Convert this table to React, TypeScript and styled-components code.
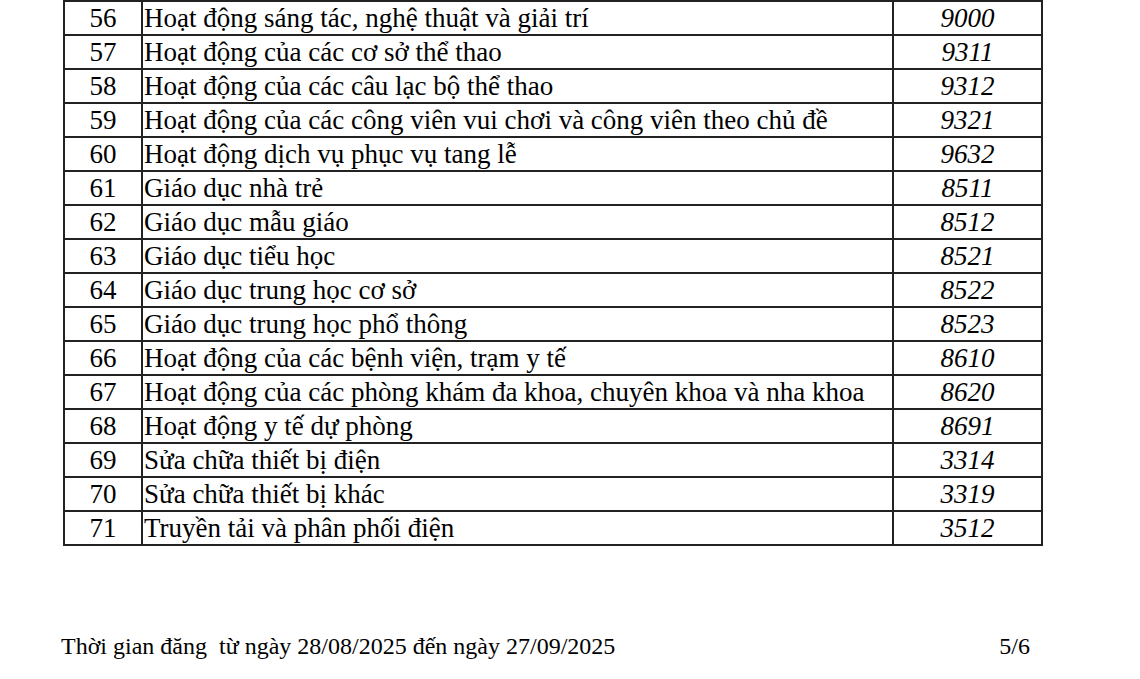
import React from "react";
import styled, { createGlobalStyle } from "styled-components";

const Global = createGlobalStyle`
  html, body { margin: 0; padding: 0; background: #fff; }
  body { font-family: "Liberation Serif", "Times New Roman", serif; color: #000; }
`;

const Page = styled.div`
  width: 1140px;
  height: 679px;
  overflow: hidden;
  display: flex;
  flex-direction: column;
`;

const Table = styled.table`
  margin-left: 63px;
  width: 978px;
  border-collapse: collapse;
  table-layout: fixed;
  font-size: 27px;
`;

const Row = styled.tr`
  height: 34px;
`;

const Cell = styled.td<{ $align?: string; $italic?: boolean }>`
  border: 2px solid #222;
  padding: 0 1px;
  text-align: ${(p) => p.$align || "left"};
  font-style: ${(p) => (p.$italic ? "italic" : "normal")};
  line-height: 30px;
  white-space: nowrap;
  vertical-align: middle;
`;

const Footer = styled.div`
  margin-top: 87px;
  padding-left: 61px;
  width: 969px;
  display: flex;
  justify-content: space-between;
  font-size: 24px;
`;

const rows: [number, string, string][] = [
  [56, "Hoạt động sáng tác, nghệ thuật và giải trí", "9000"],
  [57, "Hoạt động của các cơ sở thể thao", "9311"],
  [58, "Hoạt động của các câu lạc bộ thể thao", "9312"],
  [59, "Hoạt động của các công viên vui chơi và công viên theo chủ đề", "9321"],
  [60, "Hoạt động dịch vụ phục vụ tang lễ", "9632"],
  [61, "Giáo dục nhà trẻ", "8511"],
  [62, "Giáo dục mẫu giáo", "8512"],
  [63, "Giáo dục tiểu học", "8521"],
  [64, "Giáo dục trung học cơ sở", "8522"],
  [65, "Giáo dục trung học phổ thông", "8523"],
  [66, "Hoạt động của các bệnh viện, trạm y tế", "8610"],
  [67, "Hoạt động của các phòng khám đa khoa, chuyên khoa và nha khoa", "8620"],
  [68, "Hoạt động y tế dự phòng", "8691"],
  [69, "Sửa chữa thiết bị điện", "3314"],
  [70, "Sửa chữa thiết bị khác", "3319"],
  [71, "Truyền tải và phân phối điện", "3512"],
];

export default function App() {
  return (
    <Page>
      <Global />
      <Table>
        <colgroup>
          <col style={{ width: 78 }} />
          <col style={{ width: 751 }} />
          <col style={{ width: 149 }} />
        </colgroup>
        <tbody>
          {rows.map(([n, t, c]) => (
            <Row key={n}>
              <Cell $align="center">{n}</Cell>
              <Cell>{t}</Cell>
              <Cell $align="center" $italic>{c}</Cell>
            </Row>
          ))}
        </tbody>
      </Table>
      <Footer>
        <span>Thời gian đăng&nbsp; từ ngày 28/08/2025 đến ngày 27/09/2025</span>
        <span>5/6</span>
      </Footer>
    </Page>
  );
}
